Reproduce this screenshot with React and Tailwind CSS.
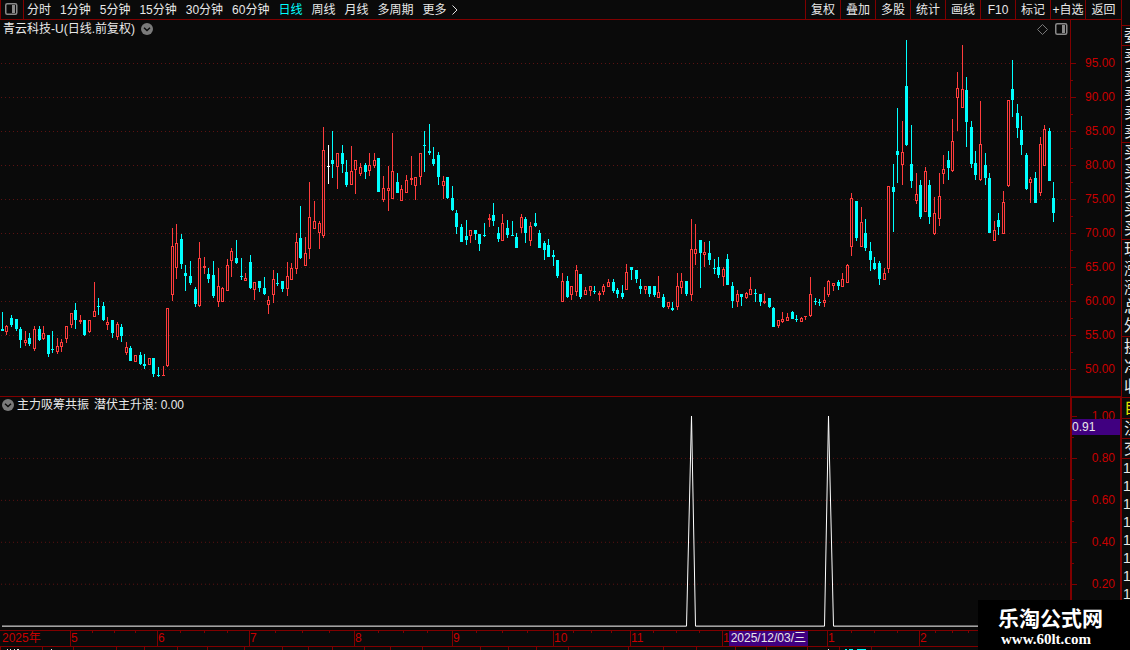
import React from "react";

const periods = [
  "分时",
  "1分钟",
  "5分钟",
  "15分钟",
  "30分钟",
  "60分钟",
  "日线",
  "周线",
  "月线",
  "多周期",
  "更多",
];

const tools = ["复权", "叠加", "多股", "统计", "画线", "F10", "标记", "+自选", "返回"];

const priceLabels = [95, 90, 85, 80, 75, 70, 65, 60, 55, 50];
const signalLabels = ["1.00", "0.80", "0.60", "0.40", "0.20"];

// month label and the width of its span on the time axis
const months = [
  ["2025年", 70],
  ["5", 87],
  ["6", 92],
  ["7", 105],
  ["8", 98],
  ["9", 101],
  ["10", 77],
  ["11", 92],
  ["1", 105],
  ["1", 92],
  ["2", 202],
];

const weekTicks = [
  92, 114, 135, 180, 204, 227, 275, 302, 329, 378, 403, 427, 476, 502, 527, 573,
  591, 611, 653, 676, 699, 851, 874, 897, 935, 952, 968,
];

const footerTicks = [
  0, 42, 73, 116, 144, 177, 207, 244, 282, 308, 332, 364, 390, 422, 480, 508,
  536, 568, 628, 663, 696, 735, 766, 807, 839, 871,
];

// x, high, body top, body bottom, low, kind (1 = up, 0 = down, 2 = flat)
const candles = [
  [2, 312, 329, 331, 331, 0], [6, 325, 326, 332, 335, 1], [11, 315, 318, 325, 327, 0],
  [16, 319, 319, 329, 331, 0], [20, 327, 329, 340, 348, 0], [25, 331, 340, 343, 346, 1],
  [29, 333, 338, 344, 346, 0], [34, 326, 329, 349, 351, 1], [39, 326, 329, 340, 341, 0],
  [43, 326, 333, 339, 340, 1], [48, 335, 335, 354, 357, 0], [52, 331, 349, 350, 353, 0],
  [57, 338, 346, 352, 354, 1], [61, 339, 342, 347, 352, 1], [66, 326, 326, 339, 343, 1],
  [71, 313, 313, 325, 328, 1], [75, 303, 310, 320, 329, 0], [80, 315, 320, 322, 324, 1],
  [84, 320, 320, 335, 336, 0], [89, 320, 320, 332, 333, 1], [94, 282, 311, 317, 317, 1],
  [98, 298, 306, 307, 315, 0], [103, 302, 306, 320, 321, 0], [107, 317, 322, 325, 330, 1],
  [112, 320, 320, 333, 338, 0], [117, 322, 324, 337, 340, 1], [121, 324, 327, 336, 342, 0],
  [126, 342, 347, 353, 355, 1], [130, 346, 348, 361, 361, 0], [135, 355, 355, 362, 362, 1],
  [140, 352, 355, 364, 365, 0], [144, 354, 364, 366, 369, 0], [149, 358, 358, 365, 365, 1],
  [153, 358, 358, 374, 377, 0], [158, 367, 375, 376, 377, 0], [163, 366, 375, 376, 376, 1],
  [167, 308, 308, 366, 367, 1], [172, 228, 246, 295, 301, 1], [176, 224, 243, 268, 279, 1],
  [181, 234, 239, 264, 269, 0], [185, 265, 273, 276, 291, 0], [190, 261, 276, 283, 285, 0],
  [195, 287, 289, 304, 307, 0], [199, 242, 258, 306, 307, 1], [204, 257, 266, 268, 274, 1],
  [208, 268, 274, 279, 283, 0], [213, 261, 275, 296, 298, 0], [218, 268, 286, 302, 307, 1],
  [222, 287, 288, 302, 302, 1], [227, 259, 265, 291, 291, 1], [231, 248, 251, 261, 277, 1],
  [236, 240, 258, 263, 264, 0], [241, 258, 276, 277, 280, 0], [245, 273, 278, 281, 281, 1],
  [250, 255, 262, 288, 289, 0], [254, 282, 282, 290, 300, 1], [259, 281, 281, 288, 292, 0],
  [264, 277, 288, 294, 295, 0], [268, 296, 300, 305, 314, 1], [273, 270, 279, 295, 303, 1],
  [277, 273, 283, 284, 286, 0], [282, 281, 281, 289, 292, 0], [287, 262, 276, 289, 296, 1],
  [291, 263, 268, 280, 280, 1], [296, 233, 242, 269, 274, 1], [300, 206, 238, 258, 259, 0],
  [305, 237, 253, 266, 266, 1], [309, 182, 217, 249, 259, 1], [314, 201, 221, 229, 229, 1],
  [319, 221, 223, 233, 249, 1], [323, 127, 150, 236, 238, 1], [328, 145, 166, 167, 184, 2],
  [332, 131, 160, 164, 178, 0], [337, 153, 153, 167, 189, 1], [342, 145, 153, 164, 173, 0],
  [346, 160, 172, 185, 187, 0], [351, 146, 171, 185, 185, 1], [355, 160, 160, 170, 194, 1],
  [360, 163, 167, 174, 176, 1], [365, 163, 165, 172, 179, 0], [369, 153, 165, 171, 176, 1],
  [374, 153, 160, 166, 168, 1], [378, 158, 158, 192, 192, 0], [383, 176, 188, 200, 202, 1],
  [388, 166, 188, 191, 211, 1], [392, 133, 171, 199, 199, 1], [397, 173, 182, 193, 193, 0],
  [401, 185, 189, 201, 201, 1], [406, 175, 180, 193, 193, 1], [411, 156, 178, 180, 185, 1],
  [415, 177, 177, 186, 200, 1], [420, 153, 153, 177, 185, 1], [424, 131, 145, 146, 172, 0],
  [429, 124, 151, 153, 155, 0], [433, 147, 159, 164, 166, 0], [438, 152, 155, 177, 185, 0],
  [443, 176, 181, 186, 199, 1], [447, 177, 177, 198, 199, 0], [452, 186, 198, 210, 211, 0],
  [456, 210, 213, 227, 234, 0], [461, 224, 227, 242, 242, 0], [466, 220, 236, 240, 245, 0],
  [470, 230, 230, 236, 243, 1], [475, 230, 230, 234, 240, 0], [479, 234, 234, 244, 251, 0],
  [484, 223, 235, 236, 237, 0], [489, 214, 218, 220, 227, 1], [493, 203, 215, 221, 226, 0],
  [498, 227, 233, 239, 242, 0], [502, 214, 223, 241, 241, 1], [507, 220, 228, 235, 238, 0],
  [512, 221, 235, 236, 236, 0], [516, 233, 237, 248, 248, 0], [521, 214, 217, 228, 233, 1],
  [525, 217, 219, 233, 243, 0], [530, 222, 226, 241, 246, 1], [535, 213, 223, 226, 227, 0],
  [539, 230, 233, 248, 248, 0], [544, 241, 243, 250, 260, 0], [548, 239, 245, 257, 257, 0],
  [553, 250, 255, 257, 266, 0], [557, 260, 260, 276, 278, 0], [562, 273, 281, 302, 302, 1],
  [567, 276, 281, 297, 298, 0], [571, 286, 286, 295, 300, 1], [576, 265, 270, 292, 296, 1],
  [580, 274, 274, 297, 299, 0], [585, 287, 290, 295, 295, 1], [590, 286, 286, 291, 296, 1],
  [594, 286, 291, 292, 294, 0], [599, 291, 293, 295, 301, 1], [603, 284, 286, 292, 295, 1],
  [608, 279, 282, 287, 287, 1], [613, 279, 282, 291, 293, 0], [617, 288, 290, 294, 298, 0],
  [622, 285, 293, 297, 299, 0], [626, 264, 272, 290, 290, 1], [631, 267, 267, 270, 280, 0],
  [636, 270, 270, 279, 283, 0], [640, 279, 286, 289, 294, 0], [645, 286, 286, 290, 294, 1],
  [649, 286, 286, 294, 297, 0], [654, 286, 286, 295, 297, 0], [658, 276, 292, 298, 298, 1],
  [663, 294, 297, 307, 308, 0], [668, 302, 302, 307, 309, 1], [672, 302, 308, 310, 311, 0],
  [677, 273, 286, 307, 310, 1], [681, 273, 281, 288, 294, 1], [686, 281, 281, 294, 296, 0],
  [691, 219, 249, 295, 301, 1], [695, 224, 249, 254, 265, 1], [700, 240, 240, 253, 288, 0],
  [704, 242, 252, 255, 267, 1], [709, 241, 253, 260, 265, 0], [714, 259, 268, 269, 274, 0],
  [718, 257, 267, 275, 278, 0], [723, 267, 269, 277, 286, 1], [727, 254, 259, 285, 285, 0],
  [732, 282, 286, 301, 308, 0], [737, 290, 294, 302, 307, 1], [741, 294, 294, 297, 306, 0],
  [746, 292, 293, 298, 299, 1], [750, 277, 289, 295, 295, 1], [755, 289, 293, 294, 302, 0],
  [760, 294, 294, 302, 306, 0], [764, 293, 301, 303, 304, 1], [769, 298, 298, 307, 308, 0],
  [773, 307, 308, 327, 327, 0], [778, 320, 320, 326, 328, 1], [782, 312, 319, 322, 323, 1],
  [787, 313, 317, 321, 321, 1], [792, 311, 312, 319, 319, 0], [796, 315, 319, 320, 322, 0],
  [801, 317, 318, 322, 322, 1], [805, 316, 316, 317, 320, 1], [810, 277, 294, 316, 317, 1],
  [815, 298, 301, 302, 305, 0], [819, 299, 302, 303, 306, 0], [824, 287, 300, 303, 307, 1],
  [828, 280, 281, 295, 297, 1], [833, 283, 283, 286, 291, 1], [838, 280, 282, 286, 290, 0],
  [842, 273, 279, 287, 287, 1], [847, 264, 265, 283, 283, 1], [851, 193, 198, 247, 256, 1],
  [856, 201, 201, 238, 241, 0], [861, 207, 222, 247, 247, 1], [865, 219, 233, 248, 251, 0],
  [870, 242, 251, 260, 271, 0], [874, 257, 263, 269, 270, 0], [879, 261, 263, 279, 285, 0],
  [884, 268, 273, 280, 280, 1], [888, 186, 186, 269, 273, 1], [893, 164, 187, 192, 232, 0],
  [897, 108, 151, 155, 183, 0], [902, 121, 152, 165, 185, 1], [906, 40, 86, 145, 146, 0],
  [911, 125, 164, 181, 188, 0], [916, 173, 194, 201, 204, 1], [920, 180, 185, 217, 219, 0],
  [925, 167, 171, 212, 212, 1], [929, 180, 185, 217, 224, 0], [934, 197, 213, 234, 235, 1],
  [939, 173, 196, 219, 226, 1], [943, 155, 169, 174, 184, 1], [948, 151, 160, 168, 180, 0],
  [952, 119, 141, 171, 172, 1], [957, 72, 88, 98, 131, 1], [962, 45, 89, 108, 108, 1],
  [966, 77, 90, 122, 147, 0], [971, 121, 127, 164, 168, 0], [975, 151, 163, 175, 180, 0],
  [980, 101, 144, 180, 181, 1], [985, 153, 165, 178, 185, 0], [989, 173, 178, 233, 233, 0],
  [994, 221, 230, 241, 241, 1], [998, 213, 220, 227, 235, 0], [1003, 191, 202, 234, 234, 1],
  [1008, 100, 100, 186, 187, 1], [1012, 60, 89, 100, 117, 0], [1017, 104, 113, 128, 138, 0],
  [1021, 116, 130, 145, 155, 0], [1026, 153, 155, 189, 190, 0], [1030, 177, 179, 183, 203, 1],
  [1035, 172, 178, 203, 203, 0], [1040, 137, 144, 193, 196, 1], [1044, 125, 129, 166, 166, 1],
  [1049, 128, 131, 181, 181, 0], [1053, 182, 198, 213, 222, 0],
];

const candleColors = ["#00ffff", "#ff3c3c", "#ffffff"];

// quote panel on the right, only its first column is visible
const quoteGroups = [
  { rows: ["委"], size: "h-5" },
  { rows: ["卖", "卖", "卖", "卖", "卖"], size: "h-[97px]" },
  { rows: ["买", "买", "买", "买", "买"], size: "h-[97px]" },
  { rows: ["现", "涨", "涨", "总", "外"], size: "h-[97px]" },
  { rows: ["换", "净", "收"], size: "h-[61px]" },
  { rows: ["自"], size: "h-[21px] text-[#e6e600]" },
  { rows: ["注"], size: "h-5" },
  { rows: ["交"], size: "h-5" },
];

const PanelIcon = () => (
  <svg width="13" height="12" viewBox="0 0 13 12" fill="none">
    <rect x="0.75" y="0.75" width="11" height="10.5" rx="1.5" stroke="#8a8a8a" strokeWidth="1.5" />
    <rect x="7" y="2" width="3" height="8" fill="#8a8a8a" />
  </svg>
);

const ChevronCircle = () => (
  <svg width="12" height="12" viewBox="0 0 12 12">
    <circle cx="6" cy="6" r="6" fill="#7a7a7a" />
    <path d="M3 4.8 L6 7.6 L9 4.8" fill="none" stroke="#0a0a0a" strokeWidth="1.4" />
  </svg>
);

const Candle = ({ data }) => {
  const [x, high, top, bottom, low, kind] = data;
  const color = candleColors[kind];
  const hollow = kind === 1 && bottom - top > 2;

  return (
    <g fill={color}>
      {top > high && <rect x={x} y={high} width="1" height={top - high} />}
      {low > bottom && <rect x={x} y={bottom} width="1" height={low - bottom} />}
      {hollow ? (
        <>
          <rect x={x - 1} y={top} width="3" height={bottom - top} />
          <rect x={x} y={top + 1} width="1" height={bottom - top - 2} fill="#0a0a0a" />
        </>
      ) : (
        <rect x={x - 1} y={top} width="3" height={bottom - top} />
      )}
    </g>
  );
};

const GridLines = ({ rows }) =>
  rows.map((y) => (
    <line
      key={y}
      x1="1"
      x2="1068"
      y1={y + 0.5}
      y2={y + 0.5}
      stroke="#5c1212"
      strokeDasharray="1 3"
    />
  ));

const AxisTicks = ({ box, major, minor }) => (
  <svg
    className="absolute inset-y-0 left-0 h-full w-[5px]"
    viewBox={box}
    preserveAspectRatio="none"
    shapeRendering="crispEdges"
    fill="#800000"
  >
    {major.map((y) => (
      <rect key={y} x="0" y={y} width="5" height="1" />
    ))}
    {minor.map((y) => (
      <rect key={y} x="0" y={y} width="2" height="1" />
    ))}
  </svg>
);

const Toolbar = () => (
  <header className="flex h-5 shrink-0 border-b border-[#800000]">
    <button aria-label="侧栏" className="flex w-6 items-center justify-center border-x border-[#800000] pr-px pb-[2px]">
      <PanelIcon />
    </button>
    <nav className="flex flex-1 items-center gap-[9px] pl-[3px]">
      {periods.map((item) => (
        <button
          key={item}
          className={item === "日线" ? "leading-[18px] text-[#00ffff]" : "leading-[18px]"}
        >
          {item}
        </button>
      ))}
      <svg className="-ml-1" width="6" height="10" viewBox="0 0 6 10" fill="none" stroke="#e0e0e0">
        <path d="M0.5 0.5 L5 5 L0.5 9.5" />
      </svg>
    </nav>
    <div className="flex">
      {tools.map((item) => (
        <button
          key={item}
          className="w-[35px] border-l border-[#800000] leading-[18px] whitespace-nowrap last:w-9"
        >
          {item}
        </button>
      ))}
    </div>
  </header>
);

const PriceSection = () => {
  const rows = priceLabels.map((_, i) => 63 + i * 34);

  return (
    <section className="flex min-h-0 flex-[377] border-b border-[#800000]">
      <div className="flex min-w-0 flex-1 flex-col">
        <div className="flex h-[18px] shrink-0 items-center pr-[2px] pl-[3px]">
          <h1>青云科技-U(日线.前复权)</h1>
          <button aria-label="指标菜单" className="ml-[6px]">
            <ChevronCircle />
          </button>
          <button aria-label="标注" className="ml-auto">
            <svg width="11" height="11" viewBox="0 0 11 11" fill="none" stroke="#777777">
              <path d="M5.5 0.5 L10.5 5.5 L5.5 10.5 L0.5 5.5 Z" />
            </svg>
          </button>
          <button aria-label="右侧栏" className="ml-[7px]">
            <PanelIcon />
          </button>
        </div>
        <svg
          className="min-h-0 w-full flex-1"
          viewBox="0 38 1070 358"
          preserveAspectRatio="none"
          shapeRendering="crispEdges"
        >
          <GridLines rows={rows} />
          {candles.map((c) => (
            <Candle key={c[0]} data={c} />
          ))}
        </svg>
      </div>
      <div className="relative flex w-[51px] flex-col justify-between border-l border-[#800000] pt-[35px] pr-[6px] pb-[19px] text-right leading-4 text-[#c80000]">
        <AxisTicks box="0 20 5 376" major={rows} minor={rows.slice(0, -1).map((y) => y + 17)} />
        {priceLabels.map((p) => (
          <span key={p}>{p.toFixed(2)}</span>
        ))}
      </div>
    </section>
  );
};

const SignalSection = () => {
  const rows = [416, 458, 500, 542, 584];

  return (
    <section className="flex min-h-0 flex-[233]">
      <div className="flex min-w-0 flex-1 flex-col">
        <div className="flex h-4 shrink-0 items-center pl-[2px]">
          <button aria-label="副图菜单">
            <ChevronCircle />
          </button>
          <h2 className="ml-[3px]">主力吸筹共振</h2>
          <span className="ml-[5px]">潜伏主升浪: 0.00</span>
        </div>
        <svg
          className="min-h-0 w-full flex-1"
          viewBox="0 413 1070 217"
          preserveAspectRatio="none"
          shapeRendering="crispEdges"
        >
          <GridLines rows={rows.slice(1)} />
          <polyline
            points="2,626.5 686.5,626.5 691.5,416 695.5,626.5 824.5,626.5 828.5,416 833.5,626.5 1070,626.5"
            fill="none"
            stroke="#ffffff"
          />
        </svg>
      </div>
      <div className="relative flex w-[51px] flex-col justify-between border-t border-r border-l-2 border-[#800000] pt-[10px] pr-[5px] pb-[38px] text-right leading-4 text-[#c80000]">
        <AxisTicks box="0 398 5 232" major={rows} minor={[437, 479, 521, 563]} />
        {signalLabels.map((v) => (
          <span key={v}>{v}</span>
        ))}
        <span className="absolute inset-x-0 top-[21px] bg-[#400080] text-left leading-4 text-[#e8e8e8]">
          0.91
        </span>
      </div>
    </section>
  );
};

const TimeAxis = () => (
  <div className="relative h-[17px] shrink-0 border-y border-[#800000] text-[#c80000]">
    <div
      className="grid h-full"
      style={{ gridTemplateColumns: months.map((m) => `${m[1]}fr`).join(" ") }}
    >
      {months.map(([label], i) => (
        <span
          key={i}
          className="min-w-0 border-l border-[#800000] leading-[15px] first:border-transparent first:pl-px"
        >
          {label}
        </span>
      ))}
    </div>
    <svg
      className="absolute inset-x-0 top-0 h-[2px] w-full"
      viewBox="0 0 1121 2"
      preserveAspectRatio="none"
      shapeRendering="crispEdges"
      fill="#800000"
    >
      {weekTicks.map((x) => (
        <rect key={x} x={x} y="0" width="1" height="2" />
      ))}
    </svg>
    <time
      dateTime="2025-12-03"
      className="absolute top-0 left-[65%] bg-[#400080] px-[2px] leading-[15px] text-[#e8e8e8]"
    >
      2025/12/03/三
    </time>
  </div>
);

const FooterStrip = () => (
  <svg
    className="h-[3px] w-full shrink-0"
    viewBox="0 0 1121 3"
    preserveAspectRatio="none"
    shapeRendering="crispEdges"
    fill="#800000"
  >
    {footerTicks.map((x) => (
      <rect key={x} x={x} y="0" width="1" height="3" />
    ))}
    <path fill="#e8e8e8" d="M7 2h1v1h-1z M10 2h1v1h-1z M14 2h1v1h-1z M17 2h2v1h-2z M51 2h1v1h-1z M828 2h1v1h-1z" />
    <path fill="#00ffff" d="M845 2h2v1h-2z M849 2h4v1h-4z M857 2h9v1h-9z" />
  </svg>
);

const QuotePanel = () => (
  <aside className="w-[9px] shrink-0 overflow-hidden border-l border-[#800000] pt-[25px] text-base text-[#e8e8e8]">
    {quoteGroups.map((group, i) => (
      <div key={i} className={`flex flex-col border-t border-[#800000] ${group.size}`}>
        {group.rows.map((row, j) => (
          <span key={j} className="flex min-h-0 flex-1 items-center pl-[2px] leading-none whitespace-nowrap">
            {row}
          </span>
        ))}
      </div>
    ))}
    <div className="border-t border-[#800000] pl-px text-sm leading-[18px]">
      {[1, 2, 3, 4, 5, 6, 7, 8].map((n) => (
        <div key={n}>1</div>
      ))}
    </div>
  </aside>
);

const App = () => {
  return (
    <div className="relative flex h-screen overflow-hidden bg-[#0a0a0a] font-['Liberation_Sans','Noto_Sans_CJK_SC',sans-serif] text-xs text-[#e8e8e8]">
      <main className="flex min-w-0 flex-1 flex-col">
        <Toolbar />
        <PriceSection />
        <SignalSection />
        <TimeAxis />
        <FooterStrip />
      </main>
      <QuotePanel />

      {/* Site mark over the bottom right corner */}
      <div className="absolute right-0 bottom-0 flex h-[50px] w-[152px] flex-col bg-black pt-2 pl-5 font-bold text-white">
        <span className="text-[21px] leading-[22px]">乐淘公式网</span>
        <a
          href="#"
          className="pl-[3px] font-['Liberation_Serif',serif] text-[15px] leading-[18px]"
        >
          www.60lt.com
        </a>
      </div>
    </div>
  );
};

export default App;
